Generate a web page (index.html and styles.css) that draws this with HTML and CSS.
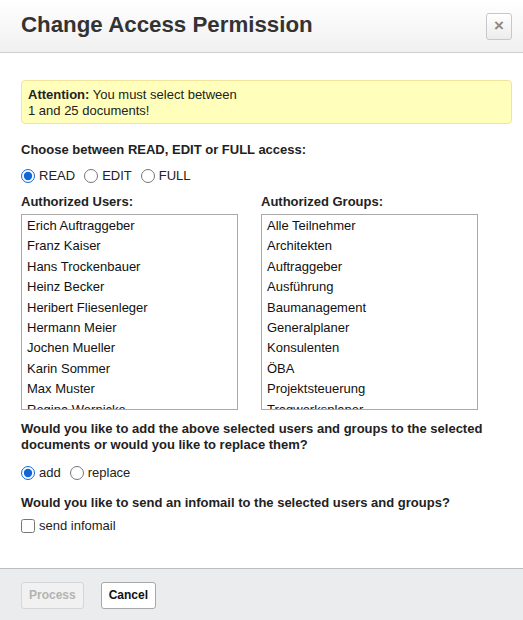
FILE: index.html
```html
<!DOCTYPE html>
<html>
<head>
<meta charset="utf-8">
<link rel="stylesheet" href="styles.css">
</head>
<body>
<div class="dialog">
  <div class="header">
    <h1 class="title">Change Access Permission</h1>
    <button class="close" type="button">&times;</button>
  </div>
  <div class="content">
    <div class="alert"><b>Attention:</b> You must select between<br>1 and 25 documents!</div>
    <div class="label">Choose between READ, EDIT or FULL access:</div>
    <div class="radios">
      <label class="opt"><input type="radio" name="acc" checked>READ</label>
      <label class="opt"><input type="radio" name="acc">EDIT</label>
      <label class="opt"><input type="radio" name="acc">FULL</label>
    </div>
    <div class="lists">
      <div class="col">
        <div class="label small">Authorized Users:</div>
        <div class="listbox">
          <div class="item">Erich Auftraggeber</div>
          <div class="item">Franz Kaiser</div>
          <div class="item">Hans Trockenbauer</div>
          <div class="item">Heinz Becker</div>
          <div class="item">Heribert Fliesenleger</div>
          <div class="item">Hermann Meier</div>
          <div class="item">Jochen Mueller</div>
          <div class="item">Karin Sommer</div>
          <div class="item">Max Muster</div>
          <div class="item">Regina Wernicke</div>
        </div>
      </div>
      <div class="col">
        <div class="label small">Authorized Groups:</div>
        <div class="listbox">
          <div class="item">Alle Teilnehmer</div>
          <div class="item">Architekten</div>
          <div class="item">Auftraggeber</div>
          <div class="item">Ausführung</div>
          <div class="item">Baumanagement</div>
          <div class="item">Generalplaner</div>
          <div class="item">Konsulenten</div>
          <div class="item">ÖBA</div>
          <div class="item">Projektsteuerung</div>
          <div class="item">Tragwerksplaner</div>
        </div>
      </div>
    </div>
    <div class="label q">Would you like to add the above selected users and groups to the selected documents or would you like to replace them?</div>
    <div class="radios">
      <label class="opt"><input type="radio" name="mode" checked>add</label>
      <label class="opt"><input type="radio" name="mode">replace</label>
    </div>
    <div class="label q2">Would you like to send an infomail to the selected users and groups?</div>
    <div class="check">
      <label class="opt"><input type="checkbox">send infomail</label>
    </div>
  </div>
  <div class="footer">
    <button class="btn disabled" type="button" disabled>Process</button>
    <button class="btn" type="button">Cancel</button>
  </div>
</div>
</body>
</html>
```
FILE: styles.css
```css
* { box-sizing: border-box; }
html, body {
  margin: 0;
  padding: 0;
  background: #fff;
}
body {
  font-family: "Liberation Sans", Arial, sans-serif;
  font-size: 13px;
  color: #222;
  width: 523px;
  height: 620px;
  overflow: hidden;
}
.dialog {
  display: flex;
  flex-direction: column;
  height: 620px;
}
.header {
  height: 53px;
  display: flex;
  align-items: center;
  justify-content: space-between;
  padding: 0 11px 0 21px;
  background: linear-gradient(#ffffff, #f0f0f0);
  border-bottom: 1px solid #cfcfcf;
}
.title {
  margin: 0;
  font-size: 22.3px;
  font-weight: bold;
  color: #333;
  padding-bottom: 2px;
}
.close {
  width: 26px;
  height: 27px;
  border: 1px solid #c8c8c8;
  border-radius: 3px;
  background: linear-gradient(#ffffff, #ececec);
  color: #8a8a8a;
  font-family: "Liberation Sans", Arial, sans-serif;
  font-size: 17px;
  font-weight: bold;
  line-height: 1;
  padding: 0 0 2px 0;
  margin-top: 0;
}
.content {
  flex: 1;
  padding: 27px 11px 0 21px;
}
.alert {
  background: #ffffbb;
  border: 1px solid #f2e49a;
  border-radius: 4px;
  padding: 6px 6px 5px 6px;
  line-height: 16px;
  height: 44px;
  margin-bottom: 18px;
}
.label {
  font-weight: bold;
  line-height: 16px;
  color: #222;
}
.radios {
  display: flex;
  gap: 9px;
  margin-top: 9px;
  height: 18px;
  align-items: center;
}
.opt {
  display: inline-flex;
  align-items: center;
  line-height: 16px;
}
.opt input {
  margin: 0 4px 0 0;
  width: 14px;
  height: 14px;
  accent-color: #1266d6;
}
.check {
  margin-top: 6px;
  height: 18px;
  display: flex;
  align-items: center;
}
.check input {
  width: 14px;
  height: 14px;
}
.lists {
  display: grid;
  grid-template-columns: 217px 217px;
  column-gap: 23px;
  margin-top: 9px;
}
.label.small {
  margin-bottom: 4px;
}
.listbox {
  height: 196px;
  border: 1px solid #a9a9a9;
  overflow: hidden;
  padding: 1px 5px;
  color: #111;
}
.item {
  height: 20.4px;
  line-height: 20.4px;
  white-space: nowrap;
}
.q {
  margin-top: 11px;
}
.q + .radios {
  margin-top: 11px;
}
.q2 {
  margin-top: 13px;
}
.footer {
  height: 52px;
  border-top: 1px solid #bdbdbd;
  background: #ebecee;
  display: flex;
  align-items: center;
  gap: 17px;
  padding: 1px 21px 0 21px;
}
.btn {
  height: 27px;
  padding: 0 7px;
  border: 1px solid #a8a8a8;
  border-radius: 3px;
  background: #fff;
  font-family: "Liberation Sans", Arial, sans-serif;
  font-size: 12px;
  font-weight: bold;
  color: #111;
}
.btn.disabled {
  border-color: #d6d6d6;
  background: #f1f1f1;
  color: #b3b3b3;
}
```
